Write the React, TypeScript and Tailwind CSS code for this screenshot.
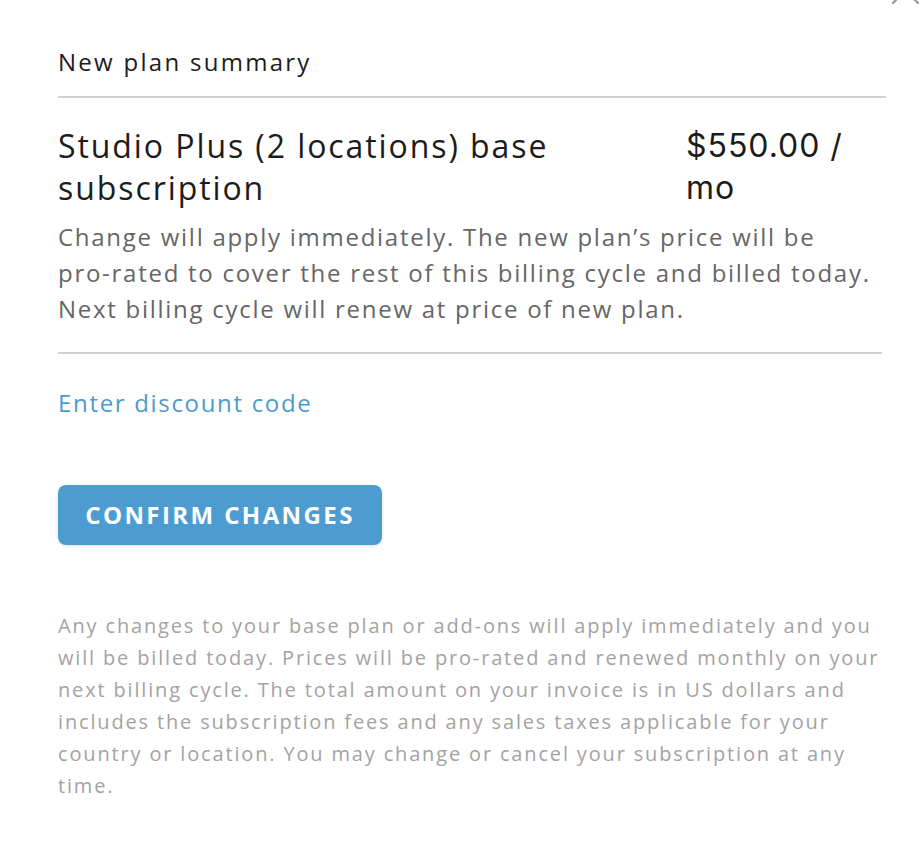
import React from "react";

export default function App() {
  return (
    <div className="relative w-[922px] h-[856px] bg-white overflow-hidden font-['Open_Sans',sans-serif]">
      <svg className="absolute right-[3px] top-[-23px]" width="27" height="27" viewBox="0 0 27 27">
        <path d="M1 1 L26 26 M26 1 L1 26" stroke="#9a9a9a" strokeWidth="2.2" strokeLinecap="round" />
      </svg>
      <div className="pl-[58px] pr-[36px] pt-[46px]">
        <div className="text-[24px] leading-[32px] text-[#1c1c1c] tracking-[0.095em]">New plan summary</div>
        <div className="mt-[18px] h-[2px] bg-[#d0d0d0]" />
        <div className="mt-[27px] flex">
          <div className="w-[628px] text-[32px] leading-[42px] text-[#1c1c1c] tracking-[0.06em] whitespace-nowrap">
            Studio Plus (2 locations) base
            <br />
            subscription
          </div>
          <div className="text-[32px] leading-[42px] text-[#1c1c1c] tracking-[0.03em] font-['Inter','Liberation_Sans',sans-serif]">
            $550.00 /
            <br />
            mo
          </div>
        </div>
        <div className="mt-[10px] text-[24px] leading-[36px] text-[#666666] whitespace-nowrap tracking-[0.072em]">
          Change will apply immediately. The new plan’s price will be
          <br />
          pro-rated to cover the rest of this billing cycle and billed today.
          <br />
          Next billing cycle will renew at price of new plan.
        </div>
        <div className="mt-[25px] mr-[4px] h-[2px] bg-[#d0d0d0]" />
        <div className="mt-[33px] text-[24px] leading-[32px] text-[#4b9bd0] tracking-[0.07em]">Enter discount code</div>
        <button className="mt-[66px] w-[324px] h-[60px] rounded-[8px] bg-[#4d9cd1] text-white text-[24px] font-bold tracking-[0.1em] flex items-center justify-center shadow-[0_1px_3px_rgba(0,0,0,0.12)]">
          CONFIRM CHANGES
        </button>
        <div className="mt-[65px] text-[20px] leading-[32px] text-[#a3a3a3] whitespace-nowrap tracking-[0.092em]">
          Any changes to your base plan or add-ons will apply immediately and you
          <br />
          will be billed today. Prices will be pro-rated and renewed monthly on your
          <br />
          next billing cycle. The total amount on your invoice is in US dollars and
          <br />
          includes the subscription fees and any sales taxes applicable for your
          <br />
          country or location. You may change or cancel your subscription at any
          <br />
          time.
        </div>
      </div>
    </div>
  );
}
